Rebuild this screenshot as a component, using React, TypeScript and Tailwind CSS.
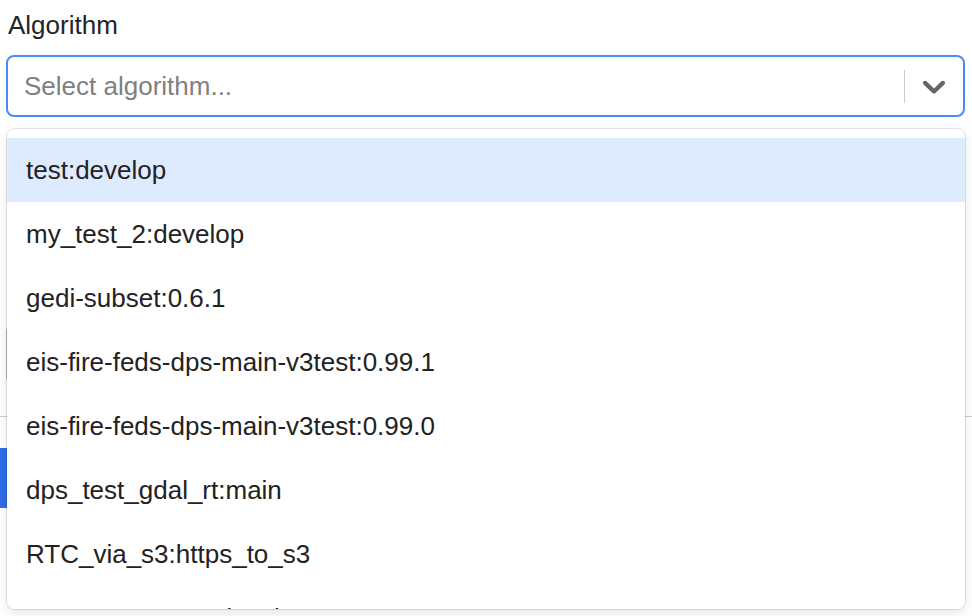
import React from 'react';

const options: string[] = [
    'test:develop',
    'my_test_2:develop',
    'gedi-subset:0.6.1',
    'eis-fire-feds-dps-main-v3test:0.99.1',
    'eis-fire-feds-dps-main-v3test:0.99.0',
    'dps_test_gdal_rt:main',
    'RTC_via_s3:https_to_s3',
    'S1_RTC_v0.0.1:develop',
];

const ChevronDown: React.FC = () => (
    <svg width="38" height="38" viewBox="0 0 20 20" fill="currentColor" aria-hidden="true">
        <path d="M4.516 7.548c0.436-0.446 1.043-0.481 1.576 0l3.908 3.747 3.908-3.747c0.533-0.481 1.141-0.446 1.574 0 0.436 0.445 0.408 1.197 0 1.615-0.406 0.418-4.695 4.502-4.695 4.502-0.217 0.223-0.502 0.335-0.787 0.335s-0.57-0.112-0.789-0.335c0 0-4.287-4.084-4.695-4.502s-0.436-1.17 0-1.615z" />
    </svg>
);

const App: React.FC = () =>
{
    return (
        <div className="relative min-h-[616px] overflow-hidden bg-white font-['Liberation_Sans',Arial,sans-serif] text-[#212529]">
            <div className="ml-[6px] mr-[7px] pt-[10px]">
                <label className="block pl-[2px] text-[26px] leading-[30px]">Algorithm</label>

                <div className="relative mt-[15px]">
                    <div className="flex h-[62px] items-center rounded-[8px] border-2 border-[#4b8bf5] bg-white">
                        <div className="flex-1 pl-[16px] text-[26px] leading-[30px] text-[#808080]">Select algorithm...</div>
                        <div className="h-[33px] w-px bg-[#cccccc]"></div>
                        <div className="flex w-[58px] items-center justify-center text-[#666666]">
                            <ChevronDown />
                        </div>
                    </div>

                    <div className="absolute left-[1px] right-0 top-[74px] z-10 h-[480px] overflow-hidden rounded-[8px] bg-white shadow-[0_0_0_1px_rgba(0,0,0,0.1),0_4px_11px_rgba(0,0,0,0.1)]">
                        <div className="pt-[9px]">
                            { options.map( ( option, index ) => (
                                <div
                                    key={ option }
                                    className={ `flex h-[64px] items-center pl-[19px] text-[26px] leading-[30px] text-[#222222] ${ index === 0 ? 'bg-[#deebff]' : 'bg-white' }` }
                                >
                                    { option }
                                </div>
                            ) ) }
                        </div>
                    </div>
                </div>

                <div className="mt-[206px] h-[62px] rounded-[8px] border border-[#bbbbbb]"></div>
            </div>

            <div className="mt-[31px] border-t border-[#cccccc]"></div>

            <div className="mt-[31px] h-[60px] w-[220px] rounded-r-[8px] bg-[#2f6ee5]"></div>
        </div>
    );
};

export default App;
